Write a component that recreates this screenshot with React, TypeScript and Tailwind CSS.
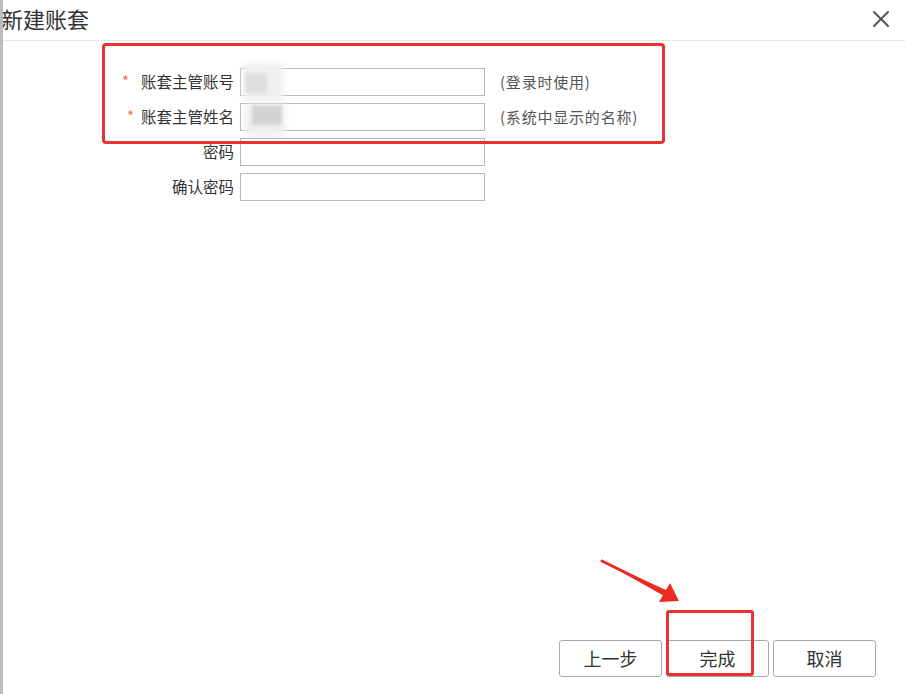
import React from "react";

const font = { fontFamily: '"Microsoft YaHei", "Noto Sans CJK SC", "Liberation Sans", sans-serif' };

function Row({ label, required, hint, blur, starOffset }: { label: string; required?: boolean; hint?: string; blur?: number; starOffset?: string }) {
  return (
    <div className="flex items-center h-[28px]">
      <div className="w-[240px] flex justify-end items-center pr-[6px] text-[15.5px] text-[#333]">
        {required && <span className={`text-[#f07050] text-[15px] leading-none ${starOffset} -mt-[4px]`}>*</span>}
        <span>{label}</span>
      </div>
      <div className="relative w-[245px] h-[28px] border border-[#b8b8b8] bg-white">
        {blur === 1 && (
          <>
            <div className="absolute left-[2px] -top-[6px] w-[40px] h-[38px] bg-[#f0f0f0] blur-[3px]" />
            <div className="absolute left-[4px] top-[4px] w-[22px] h-[20px] bg-[#dedede] blur-[1.5px]" />
          </>
        )}
        {blur === 2 && (
          <>
            <div className="absolute left-[4px] top-[0px] w-[40px] h-[32px] bg-[#efefef] blur-[3px]" />
            <div className="absolute left-[11px] top-[1px] w-[30px] h-[20px] bg-[#d4d4d4] blur-[1.5px]" />
          </>
        )}
      </div>
      {hint && <div className="ml-[15px] text-[15px] tracking-[0.8px] text-[#555]">{hint}</div>}
    </div>
  );
}

export default function App() {
  return (
    <div className="relative w-[905px] h-[694px] bg-white overflow-hidden" style={font}>
      <div className="absolute left-0 top-0 w-[3px] h-full bg-[#bdbdbd]" />
      <div className="h-[41px] border-b border-[#e6e6e6] flex items-center justify-between pl-[1px] pr-[15px]">
        <div className="text-[22px] text-[#333] leading-none -mt-[4px]">新建账套</div>
        <svg width="18" height="18" viewBox="0 0 18 18" className="-mt-[3px]">
          <path d="M2 2 L16 16 M16 2 L2 16" stroke="#555" strokeWidth="2" strokeLinecap="round" />
        </svg>
      </div>
      <div className="pt-[27px] flex flex-col gap-[7px]">
        <Row label="账套主管账号" required hint="(登录时使用)" blur={1} starOffset="mr-[12px]" />
        <Row label="账套主管姓名" required hint="(系统中显示的名称)" blur={2} starOffset="mr-[7px]" />
        <Row label="密码" />
        <Row label="确认密码" />
      </div>

      <div className="absolute left-[102px] top-[43px] w-[563px] h-[101px] border-[3px] border-[#e8322f] rounded-[4px]" />

      <div className="absolute left-[559px] top-[640px] flex gap-[4px]">
        <button className="w-[103px] h-[37px] border border-[#a9a9a9] rounded-[3px] bg-white text-[18px] text-[#333]">上一步</button>
        <button className="w-[103px] h-[37px] border border-[#a9a9a9] rounded-[3px] bg-white text-[18px] text-[#333]">完成</button>
        <button className="w-[103px] h-[37px] border border-[#a9a9a9] rounded-[3px] bg-white text-[18px] text-[#333]">取消</button>
      </div>
      <div className="absolute left-[666px] top-[610px] w-[88px] h-[66px] border-[3px] border-[#e8322f] rounded-[3px]" />

      <svg className="absolute left-0 top-0" width="905" height="694">
        <path d="M602 561 L667 593" stroke="#ec2a24" strokeWidth="3" strokeLinecap="round" />
        <path d="M600 560 L668 591 L666 597 Z" fill="#ec2a24" />
        <path d="M679 601 L659 602 L670 583 Z" fill="#ec2a24" />
      </svg>
    </div>
  );
}
